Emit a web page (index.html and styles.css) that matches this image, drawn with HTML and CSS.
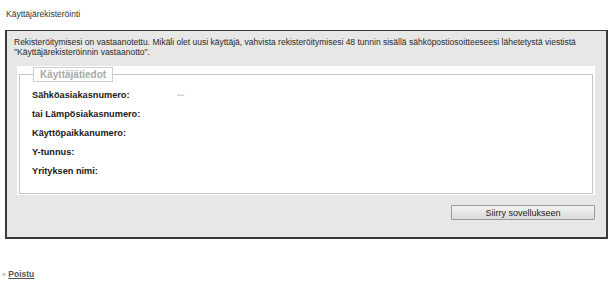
FILE: index.html
```html
<!DOCTYPE html>
<html>
<head>
  <title>Käyttäjärekisteröinti</title>
  <link rel="stylesheet" href="styles.css">
</head>
<body>
  <div class="page-title">Käyttäjärekisteröinti</div>

  <div class="panel">
    <div class="notice">
      Rekisteröitymisesi on vastaanotettu. Mikäli olet uusi käyttäjä, vahvista rekisteröitymisesi 48 tunnin sisällä sähköpostiosoitteeseesi lähetetystä viestistä
      "Käyttäjärekisteröinnin vastaanotto".
    </div>

    <div class="details">
      <fieldset class="user-info">
        <legend>Käyttäjätiedot</legend>
        <div class="info-row">
          <span class="info-label">Sähköasiakasnumero:</span>
          <span class="info-value">•• •••&nbsp;&nbsp;&nbsp;&nbsp;·</span>
        </div>
        <div class="info-row">
          <span class="info-label">tai Lämpösiakasnumero:</span>
        </div>
        <div class="info-row">
          <span class="info-label">Käyttöpaikkanumero:</span>
        </div>
        <div class="info-row">
          <span class="info-label">Y-tunnus:</span>
        </div>
        <div class="info-row">
          <span class="info-label">Yrityksen nimi:</span>
        </div>
      </fieldset>
    </div>

    <div class="actions">
      <button class="go-button">Siirry sovellukseen</button>
    </div>
  </div>

  <div class="footer-link">
    <span class="arrow">«</span> <a href="#">Poistu</a>
  </div>
</body>
</html>
```

FILE: styles.css
```css
body {
  margin: 0;
  font-family: 'Liberation Sans', Arial, sans-serif;
  font-size: 8.5px;
  color: #222;
  background-color: #fff;
}

.page-title {
  padding: 9px 0 0 6px;
  line-height: 10px;
  color: #333;
}

.panel {
  margin: 11px 8px 0 5px;
  height: 206px;
  background-color: #e6e7e6;
  border-top: 1px solid #3a3a3a;
  border-left: 2px solid #3a3a3a;
  border-right: 2px solid #3a3a3a;
  border-bottom: 2px solid #3a3a3a;
  box-sizing: content-box;
}

.notice {
  padding: 6px 7px 0 7px;
  line-height: 10px;
  color: #2a2a2a;
}

/* White card around the fieldset */
.details {
  margin: 9px 11px 0 10px;
  padding: 1px 2px 1px 2px;
  background-color: #fff;
}

.user-info {
  margin: 0;
  padding: 3px 12px 13px 12px;
  border: 1px solid #c6c6c6;
}

.user-info legend {
  margin-left: 1px;
  padding: 1px 6px;
  border: 1px solid #cfcfcf;
  font-weight: bold;
  font-size: 10px;
  color: #a9a9a9;
  line-height: 11px;
}

.info-row {
  display: flex;
  height: 19px;
  align-items: center;
}

.info-label {
  width: 145px;
  font-weight: bold;
  font-size: 9.2px;
  color: #1a1a1a;
}

.info-value {
  font-size: 6px;
  color: #c8c8c8;
  letter-spacing: -1px;
}

.actions {
  display: flex;
  justify-content: flex-end;
  margin: 10px 11px 0 0;
}

.go-button {
  width: 144px;
  height: 15px;
  padding: 0;
  font-family: 'Liberation Sans', Arial, sans-serif;
  font-size: 9px;
  color: #222;
  background: linear-gradient(#f4f4f4, #dadada);
  border: 1px solid #9a9a9a;
  border-radius: 1px;
}

.footer-link {
  padding: 30px 0 0 2px;
  color: #999;
}

.footer-link a {
  color: #555;
  font-weight: bold;
  text-decoration: underline;
}

.arrow {
  font-size: 7px;
}
```
